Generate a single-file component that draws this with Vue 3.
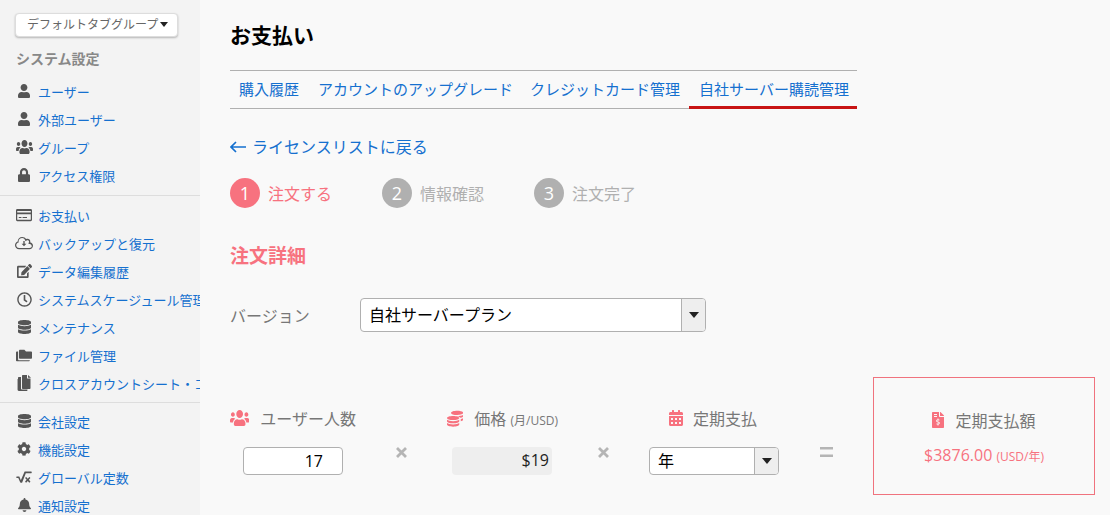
<script setup>
const P = {
  user: ['0 0 448 512', 'M224 256c70.7 0 128-57.3 128-128S294.7 0 224 0 96 57.3 96 128s57.3 128 128 128zm89.6 32h-16.7c-22.2 10.2-46.9 16-72.9 16s-50.6-5.8-72.9-16h-16.7C60.2 288 0 348.2 0 422.4V464c0 26.5 21.5 48 48 48h352c26.5 0 48-21.5 48-48v-41.6c0-74.2-60.2-134.4-134.4-134.4z'],
  users: ['0 32 640 448', 'M96 224c35.3 0 64-28.7 64-64s-28.7-64-64-64-64 28.7-64 64 28.7 64 64 64zm448 0c35.3 0 64-28.7 64-64s-28.7-64-64-64-64 28.7-64 64 28.7 64 64 64zm32 32h-64c-17.6 0-33.5 7.1-45.1 18.6 40.3 22.1 68.9 62 75.1 109.4h66c17.7 0 32-14.3 32-32v-32c0-35.3-28.7-64-64-64zm-256 0c61.9 0 112-50.1 112-112S381.9 32 320 32 208 82.1 208 144s50.1 112 112 112zm76.8 32h-8.3c-20.8 10-43.9 16-68.5 16s-47.6-6-68.5-16h-8.3C179.6 288 128 339.6 128 403.2V432c0 26.5 21.5 48 48 48h288c26.5 0 48-21.5 48-48v-28.8c0-63.6-51.6-115.2-115.2-115.2zm-223.7-13.4C161.5 263.1 145.6 256 128 256H64c-35.3 0-64 28.7-64 64v32c0 17.7 14.3 32 32 32h65.9c6.3-47.4 34.9-87.3 75.2-109.4z'],
  lock: ['0 0 448 512', 'M400 224h-24v-72C376 68.2 307.8 0 224 0S72 68.2 72 152v72H48c-26.5 0-48 21.5-48 48v192c0 26.5 21.5 48 48 48h352c26.5 0 48-21.5 48-48V272c0-26.5-21.5-48-48-48zm-104 0H152v-72c0-39.7 32.3-72 72-72s72 32.3 72 72v72z'],
  card: ['0 0 576 512', 'M48 32h480c26.5 0 48 21.5 48 48v352c0 26.5-21.500 48-48 48H48c-26.500 0-48-21.500-48-48V80c0-26.500 21.500-48 48-48zm-4 80v56h488v-56zm0 112v196c0 3 3 6 6 6h476c3 0 6-3 6-6V224zm56 104h96v36h-96zm136 0h160v36H236z'],
  cloud: ['0 0 640 512', 'M537.6 226.6c4.1-10.7 6.4-22.4 6.4-34.6 0-53-43-96-96-96-19.7 0-38.1 6-53.3 16.2C367 64.2 315.3 32 256 32c-88.4 0-160 71.6-160 160 0 2.7.1 5.4.2 8.1C40.2 219.8 0 273.2 0 336c0 79.5 64.5 144 144 144h368c70.7 0 128-57.3 128-128 0-61.9-44-113.6-102.4-125.4zM512 436H144c-55 0-100-45-100-100 0-50 36-90 85-99-.500-16-1-29-1-45 0-64 52-116 128-116 46 0 84 28 101 70l17 45 40-27c10-7 22-10 34-10 28 0 52 24 52 52 0 12-3 24-9 35l-18 42 50 10c42 8 73 42 73 83 0 33-36 60-84 60zM296 180h48v104h62L320 378l-86-94h62z'],
  edit: ['0 0 576 512', 'M402.6 83.2l90.2 90.2c3.8 3.8 3.8 10 0 13.8L274.4 405.6l-92.8 10.3c-12.4 1.4-22.9-9.1-21.5-21.5l10.3-92.8L388.8 83.2c3.8-3.8 10-3.8 13.8 0zm162-22.9l-48.8-48.8c-15.2-15.2-39.9-15.2-55.2 0l-35.4 35.4c-3.8 3.8-3.8 10 0 13.8l90.2 90.2c3.8 3.8 10 3.8 13.8 0l35.4-35.4c15.2-15.3 15.2-40 0-55.2zM384 346.2V448H64V128h229.8c3.2 0 6.2-1.3 8.5-3.5l40-40c7.6-7.6 2.2-20.5-8.5-20.5H48C21.5 64 0 85.5 0 112v352c0 26.5 21.5 48 48 48h352c26.5 0 48-21.5 48-48V306.2c0-10.7-12.9-16-20.5-8.5l-40 40c-2.2 2.3-3.5 5.3-3.5 8.5z'],
  clock: ['0 0 512 512', 'M256 8C119 8 8 119 8 256s111 248 248 248 248-111 248-248S393 8 256 8zm0 448c-110.5 0-200-89.5-200-200S145.5 56 256 56s200 89.5 200 200-89.5 200-200 200zm61.8-104.4l-84.9-61.7c-3.1-2.3-4.9-5.9-4.9-9.7V116c0-6.6 5.4-12 12-12h32c6.6 0 12 5.4 12 12v141.7l66.8 48.6c5.4 3.9 6.5 11.4 2.6 16.8L334.6 349c-3.9 5.3-11.4 6.5-16.8 2.6z'],
  db: ['0 0 448 512', 'M448 73.143v45.714C448 159.143 347.667 192 224 192S0 159.143 0 118.857V73.143C0 32.857 100.333 0 224 0s224 32.857 224 73.143zM448 176v102.857C448 319.143 347.667 352 224 352S0 319.143 0 278.857V176c48.125 33.143 136.208 48.572 224 48.572S399.874 209.143 448 176zm0 160v102.857C448 479.143 347.667 512 224 512S0 479.143 0 438.857V336c48.125 33.143 136.208 48.572 224 48.572S399.874 369.143 448 336z'],
  folders: ['0 0 640 512', 'M608 96H400l-64-64H152c-18 0-32 14-32 32v288c0 18 14 32 32 32h456c18 0 32-14 32-32V128c0-18-14-32-32-32zM84 416V96H32C14 96 0 110 0 128v320c0 18 14 32 32 32h488c18 0 32-14 32-32v-4H112c-16 0-28-12-28-28z'],
  files: ['0 0 448 512', 'M192 0h128v112h112v304c0 18-14 32-32 32H192c-18 0-32-14-32-32V32c0-18 14-32 32-32zm160 0l96 84h-96zM128 64v368c0 18 14 32 32 32h176v16c0 18-14 32-32 32H64c-18 0-32-14-32-32V96c0-18 14-32 32-32zM0 128v336c0 18 6 32 14 32V128z'],
  cog: ['0 0 512 512', 'M487.4 315.7l-42.6-24.6c4.3-23.2 4.3-47 0-70.2l42.6-24.6c4.9-2.8 7.1-8.6 5.5-14-11.1-35.6-30-67.8-54.7-94.6-3.8-4.1-10-5.1-14.8-2.3L380.8 110c-17.9-15.4-38.5-27.3-60.8-35.1V25.8c0-5.6-3.9-10.5-9.4-11.7-36.7-8.2-74.3-7.8-109.2 0-5.5 1.2-9.4 6.1-9.4 11.7V75c-22.2 7.9-42.8 19.8-60.8 35.1L88.7 85.5c-4.9-2.8-11-1.9-14.8 2.3-24.7 26.7-43.6 58.9-54.7 94.6-1.7 5.4.6 11.2 5.5 14L67.3 221c-4.3 23.2-4.3 47 0 70.2l-42.6 24.6c-4.9 2.8-7.1 8.6-5.5 14 11.1 35.6 30 67.8 54.7 94.6 3.8 4.1 10 5.1 14.8 2.3l42.6-24.6c17.9 15.4 38.5 27.3 60.8 35.1v49.2c0 5.6 3.9 10.5 9.4 11.7 36.7 8.2 74.3 7.8 109.2 0 5.5-1.2 9.4-6.1 9.4-11.7v-49.2c22.2-7.9 42.8-19.8 60.8-35.1l42.6 24.6c4.9 2.8 11 1.9 14.8-2.3 24.7-26.7 43.6-58.9 54.7-94.6 1.5-5.5-.7-11.3-5.6-14.1zM256 336c-44.1 0-80-35.9-80-80s35.9-80 80-80 80 35.9 80 80-35.9 80-80 80z'],
  sqrt: ['0 40 640 440', 'M230 470h-42c-10 0-18-6-22-14L92 300H30c-10 0-18-8-18-18v-26c0-10 8-18 18-18h86c10 0 18 6 22 14l56 124L340 70c3-8 10-14 20-14h250c10 0 18 8 18 18v26c0 10-8 18-18 18H392L248 458c-3 8-10 12-18 12zM470 320l54-54c6-6 16-6 22 0l22 22c6 6 6 16 0 22l-54 54 54 54c6 6 6 16 0 22l-22 22c-6 6-16 6-22 0l-54-54-54 54c-6 6-16 6-22 0l-22-22c-6-6-6-16 0-22l54-54-54-54c-6-6-6-16 0-22l22-22c6-6 16-6 22 0z'],
  bell: ['0 0 448 512', 'M224 512c35.32 0 63.97-28.65 63.97-64H160.03c0 35.35 28.65 64 63.97 64zm215.39-149.71c-19.32-20.76-55.47-51.99-55.47-154.29 0-77.7-54.48-139.9-127.94-155.16V32c0-17.67-14.32-32-31.98-32s-31.98 14.33-31.98 32v20.84C118.56 68.1 64.08 130.3 64.08 208c0 102.3-36.15 133.53-55.47 154.29-6 6.45-8.66 14.16-8.61 21.71.11 16.4 12.98 32 32.1 32h383.8c19.12 0 32-15.6 32.1-32 .05-7.55-2.61-15.27-8.61-21.71z'],
  coins: ['0 0 512 512', 'M512 80c0 36-86 64-192 64S128 116 128 80s86-64 192-64 192 28 192 64zM512 136v42c0 24-38 44-96 56-18-26-56-44-104-54 96-2 170-20 200-44zM0 240c0-36 86-64 192-64s192 28 192 64-86 64-192 64S0 276 0 240zM0 296c34 28 104 44 192 44s158-16 192-44v48c0 36-86 64-192 64S0 380 0 344zM0 400c34 28 104 44 192 44s158-16 192-44v48c0 36-86 64-192 64S0 484 0 448zM512 240v48c0 22-32 42-80 54v-62c0-4 0-8-2-12 34-6 62-16 82-28z'],
  cal: ['0 0 448 512', 'M0 464c0 26.5 21.5 48 48 48h352c26.5 0 48-21.5 48-48V192H0v272zm320-196c0-6.6 5.4-12 12-12h40c6.6 0 12 5.4 12 12v40c0 6.6-5.4 12-12 12h-40c-6.6 0-12-5.4-12-12v-40zm0 128c0-6.6 5.4-12 12-12h40c6.6 0 12 5.4 12 12v40c0 6.6-5.4 12-12 12h-40c-6.6 0-12-5.4-12-12v-40zM192 268c0-6.6 5.4-12 12-12h40c6.6 0 12 5.4 12 12v40c0 6.6-5.4 12-12 12h-40c-6.6 0-12-5.4-12-12v-40zm0 128c0-6.6 5.4-12 12-12h40c6.6 0 12 5.4 12 12v40c0 6.6-5.4 12-12 12h-40c-6.6 0-12-5.4-12-12v-40zM64 268c0-6.6 5.4-12 12-12h40c6.6 0 12 5.4 12 12v40c0 6.6-5.4 12-12 12H76c-6.6 0-12-5.4-12-12v-40zm0 128c0-6.6 5.4-12 12-12h40c6.6 0 12 5.4 12 12v40c0 6.6-5.4 12-12 12H76c-6.6 0-12-5.4-12-12v-40zM400 64h-48V16c0-8.8-7.2-16-16-16h-32c-8.8 0-16 7.2-16 16v48H160V16c0-8.8-7.2-16-16-16h-32c-8.8 0-16 7.2-16 16v48H48C21.5 64 0 85.5 0 112v48h448v-48c0-26.5-21.5-48-48-48z'],
  invoice: ['0 0 384 512', 'M377 105L279 7c-4.500-4.500-10.600-7-17-7h-6v128h128v-6.100c0-6.300-2.500-12.400-7-16.900zM224 136V0H24C10.700 0 0 10.700 0 24v464c0 13.300 10.700 24 24 24h336c13.300 0 24-10.700 24-24V160H248c-13.200 0-24-10.800-24-24zM64 72c0-4.400 3.600-8 8-8h80c4.400 0 8 3.600 8 8v16c0 4.400-3.600 8-8 8H72c-4.400 0-8-3.600-8-8zm0 64c0-4.400 3.600-8 8-8h80c4.400 0 8 3.600 8 8v16c0 4.400-3.600 8-8 8H72c-4.400 0-8-3.600-8-8zm144 263.900V424c0 4.400-3.600 8-8 8h-16c-4.400 0-8-3.600-8-8v-24.300c-11.300-.6-22.300-4.500-31.400-11.400-3.900-2.900-4.100-8.800-.6-12.200l11.800-11.200c2.800-2.600 6.900-2.800 10.100-.8 3.900 2.400 8.300 3.700 12.800 3.700h28.100c6.500 0 11.800-5.900 11.800-13.200 0-6-3.600-11.200-8.800-12.800l-45-13.500c-18.600-5.600-31.600-23.400-31.600-43.400 0-24.500 19.100-44.400 42.700-45.100V216c0-4.400 3.600-8 8-8h16c4.400 0 8 3.600 8 8v24.300c11.300.6 22.300 4.500 31.400 11.400 3.900 2.900 4.100 8.800.6 12.200l-11.800 11.200c-2.800 2.600-6.900 2.800-10.100.8-3.900-2.400-8.300-3.700-12.800-3.700h-28.100c-6.500 0-11.800 5.900-11.800 13.200 0 6 3.600 11.200 8.800 12.800l45 13.500c18.600 5.600 31.600 23.400 31.600 43.400 0 24.600-19.100 44.400-42.700 45.100z'],
}
const groups = [
  [['user', 'ユーザー', 12, 14], ['user', '外部ユーザー', 12, 14], ['users', 'グループ', 17, 14], ['lock', 'アクセス権限', 12, 14]],
  [['card', 'お支払い', 16, 14], ['cloud', 'バックアップと復元', 18, 14], ['edit', 'データ編集履歴', 15, 14], ['clock', 'システムスケージュール管理', 15, 15], ['db', 'メンテナンス', 13, 14], ['folders', 'ファイル管理', 16, 13], ['files', 'クロスアカウントシート・コネクション', 14, 16]],
  [['db', '会社設定', 13, 14], ['cog', '機能設定', 14, 14], ['sqrt', 'グローバル定数', 16, 12], ['bell', '通知設定', 13, 14]],
]
const tabs = ['購入履歴', 'アカウントのアップグレード', 'クレジットカード管理', '自社サーバー購読管理']
const steps = [['1', '注文する', true], ['2', '情報確認', false], ['3', '注文完了', false]]
</script>

<template>
  <div class="page">
    <aside class="side">
      <button class="group-btn">デフォルトタブグループ<i class="caret"></i></button>
      <div class="side-title">システム設定</div>
      <div v-for="(g, gi) in groups" :key="gi" class="nav-group">
        <a v-for="it in g" :key="it[1]" class="nav-item">
          <span class="nav-ic"><svg :viewBox="P[it[0]][0]" :width="it[2]" :height="it[3]" preserveAspectRatio="none"><path :d="P[it[0]][1]" fill="#555"/></svg></span>
          <span class="nav-tx">{{ it[1] }}</span>
        </a>
      </div>
    </aside>
    <main class="main">
      <h1 class="title">お支払い</h1>
      <nav class="tabs">
        <a v-for="(t, i) in tabs" :key="t" class="tab" :class="{ active: i === 3 }">{{ t }}</a>
      </nav>
      <a class="back">
        <svg viewBox="0 0 16 12" width="16" height="12"><path d="M6 1L1 6l5 5M1 6h15" fill="none" stroke="#1570cf" stroke-width="1.700"/></svg>
        ライセンスリストに戻る
      </a>
      <div class="steps">
        <div v-for="s in steps" :key="s[0]" class="step" :class="{ on: s[2] }">
          <span class="num">{{ s[0] }}</span><span>{{ s[1] }}</span>
        </div>
      </div>
      <h2 class="sub">注文詳細</h2>
      <div class="version">
        <label>バージョン</label>
        <div class="select wide"><span>自社サーバープラン</span><b><i class="caret"></i></b></div>
      </div>
      <div class="calc">
        <div class="col c1">
          <div class="head"><svg viewBox="0 32 640 448" width="20" height="16" preserveAspectRatio="none"><path :d="P.users[1]" fill="#f7727f"/></svg><span>ユーザー人数</span></div>
          <div class="input">17</div>
        </div>
        <div class="op"><svg viewBox="0 0 11 11" width="11" height="11"><path d="M1 1l9 9M10 1l-9 9" stroke="#b5b5b5" stroke-width="2.800" fill="none"/></svg></div>
        <div class="col c2">
          <div class="head"><svg viewBox="0 0 512 512" width="17" height="17"><path :d="P.coins[1]" fill="#f7727f"/></svg><span>価格 <small>(月/USD)</small></span></div>
          <div class="price">$19</div>
        </div>
        <div class="op"><svg viewBox="0 0 11 11" width="11" height="11"><path d="M1 1l9 9M10 1l-9 9" stroke="#b5b5b5" stroke-width="2.800" fill="none"/></svg></div>
        <div class="col c3">
          <div class="head"><svg viewBox="0 0 448 512" width="14" height="16"><path :d="P.cal[1]" fill="#f7727f"/></svg><span>定期支払</span></div>
          <div class="select narrow"><span>年</span><b><i class="caret"></i></b></div>
        </div>
        <div class="op eq"><svg viewBox="0 0 13 10" width="13" height="10"><path d="M0 1.250h13M0 8.750h13" stroke="#b5b5b5" stroke-width="2.500" fill="none"/></svg></div>
        <div class="total">
          <div class="head"><svg viewBox="0 0 384 512" width="12" height="16"><path :d="P.invoice[1]" fill="#f7727f"/></svg><span>定期支払額</span></div>
          <div class="amount">$3876.00 <small>(USD/年)</small></div>
        </div>
      </div>
    </main>
  </div>
</template>

<style>
html, body { margin: 0; padding: 0; }
</style>

<style scoped>
.page { display: flex; width: 1110px; height: 515px; overflow: hidden; background: #f9f9f9; font-family: "Open Sans", "Noto Sans CJK JP", sans-serif; }
.side { width: 200px; flex: none; height: 515px; overflow: hidden; background: #f3f3f3; box-sizing: border-box; padding-top: 13px; }
.group-btn { display: block; width: 163px; height: 24px; margin-left: 15px; padding: 0 0 0 11px; box-sizing: border-box; text-align: left; background: #fff; border: 1px solid #ddd; border-radius: 4px; box-shadow: 0 1px 2px rgba(0,0,0,.25); font: inherit; font-size: 12px; line-height: 22px; color: #666; white-space: nowrap; }
.caret { display: inline-block; width: 0; height: 0; border-left: 4.500px solid transparent; border-right: 4.500px solid transparent; border-top: 5px solid #222; vertical-align: middle; }
.group-btn .caret { margin-left: 2px; margin-top: -2px; }
.side-title { margin: 12px 0 0 16px; font-size: 14px; line-height: 20px; font-weight: 700; color: #888; }
.nav-group { border-bottom: 1px solid #ddd; padding-bottom: 6px; margin-bottom: 5px; }
.side-title + .nav-group { padding-top: 8px; }
.nav-group:nth-of-type(3) { padding-bottom: 5px; margin-bottom: 4px; }
.nav-group:last-child { border-bottom: 0; }
.nav-item { display: flex; align-items: center; height: 28px; white-space: nowrap; }
.nav-ic { width: 18px; margin-left: 15px; margin-right: 5px; display: flex; justify-content: center; flex: none; }
.nav-tx { font-size: 13px; color: #1570cf; }
.main { flex: 1; min-width: 0; box-sizing: border-box; padding: 0 15px 0 30px; }
.title { margin: 0; padding: 20px 0 0 0; height: 70px; box-sizing: border-box; font-size: 21px; line-height: 30px; font-weight: 700; color: #000; }
.tabs { display: flex; width: 627px; height: 39px; box-sizing: border-box; border-top: 1px solid #b0b0b0; border-bottom: 1px solid #b0b0b0; }
.tab { flex: none; padding: 0 9px; font-size: 15px; line-height: 37px; color: #1570cf; white-space: nowrap; box-sizing: border-box; height: 38px; }
.tab:nth-child(1) { margin-right: 1px; }
.tab:nth-child(2) { margin-right: -1px; }
.tab.active { width: 168px; padding-left: 10px; padding-right: 0; border-bottom: 3px solid #c81414; }
.back { display: flex; align-items: center; gap: 6px; margin-top: 26px; height: 24px; font-size: 16px; line-height: 24px; color: #1570cf; }
.steps { display: flex; margin-top: 19px; }
.step { display: flex; align-items: center; width: 152px; height: 30px; gap: 8px; font-size: 16px; color: #b0b0b0; }
.step.on { color: #f7727f; }
.num { width: 30px; height: 30px; border-radius: 50%; background: #b0b0b0; color: #fff; font-size: 18px; line-height: 30px; text-align: center; }
.step.on .num { background: #f7727f; }
.sub { margin: 33px 0 0 0; font-size: 19px; line-height: 30px; font-weight: 700; color: #f7727f; }
.version { display: flex; align-items: center; margin-top: 27px; font-size: 16px; color: #777; }
.version label { width: 130px; }
.select { display: flex; align-items: center; box-sizing: border-box; background: #fff; border: 1px solid #b0b0b0; border-radius: 4px; color: #000; font-size: 16px; overflow: hidden; }
.select span { flex: 1; padding: 0 0 2px 8px; }
.select b { width: 24px; box-sizing: border-box; align-self: stretch; display: flex; align-items: center; justify-content: center; background: #eee; border-left: 1px solid #b0b0b0; }
.select .caret { border-left-width: 5.500px; border-right-width: 5.500px; border-top-width: 6px; }
.wide { width: 346px; height: 34px; }
.narrow { width: 130px; height: 28px; }
.calc { display: flex; margin-top: 45px; align-items: flex-start; }
.col { padding-top: 28px; }
.head { display: flex; align-items: center; height: 26px; gap: 11px; font-size: 16px; color: #777; white-space: nowrap; }
small { font-size: 12px; }
.c1 { width: 126px; }
.c2 { width: 111px; }
.c3 { width: 130px; }
.c3 .head { margin-left: 20px; gap: 10px; }
.input { width: 100px; height: 28px; margin: 16px 0 0 13px; box-sizing: border-box; background: #fff; border: 1px solid #b0b0b0; border-radius: 4px; font-size: 16px; line-height: 26px; text-align: right; padding-right: 19px; color: #000; }
.price { width: 100px; height: 28px; margin: 16px 0 0 5px; box-sizing: border-box; background: #eee; border-radius: 4px; font-size: 16px; line-height: 26px; text-align: right; padding-right: 3px; color: #222; }
.c3 .narrow { margin-top: 16px; }
.op { width: 91px; margin-top: 70px; height: 11px; display: flex; justify-content: center; }
.eq { width: 94px; }
.total { width: 222px; height: 118px; box-sizing: border-box; border: 1px solid #f0737e; padding-top: 29px; text-align: center; }
.total .head { justify-content: center; height: 26px; }
.amount { margin-top: 10px; font-size: 16px; line-height: 24px; color: #f7727f; }
</style>
